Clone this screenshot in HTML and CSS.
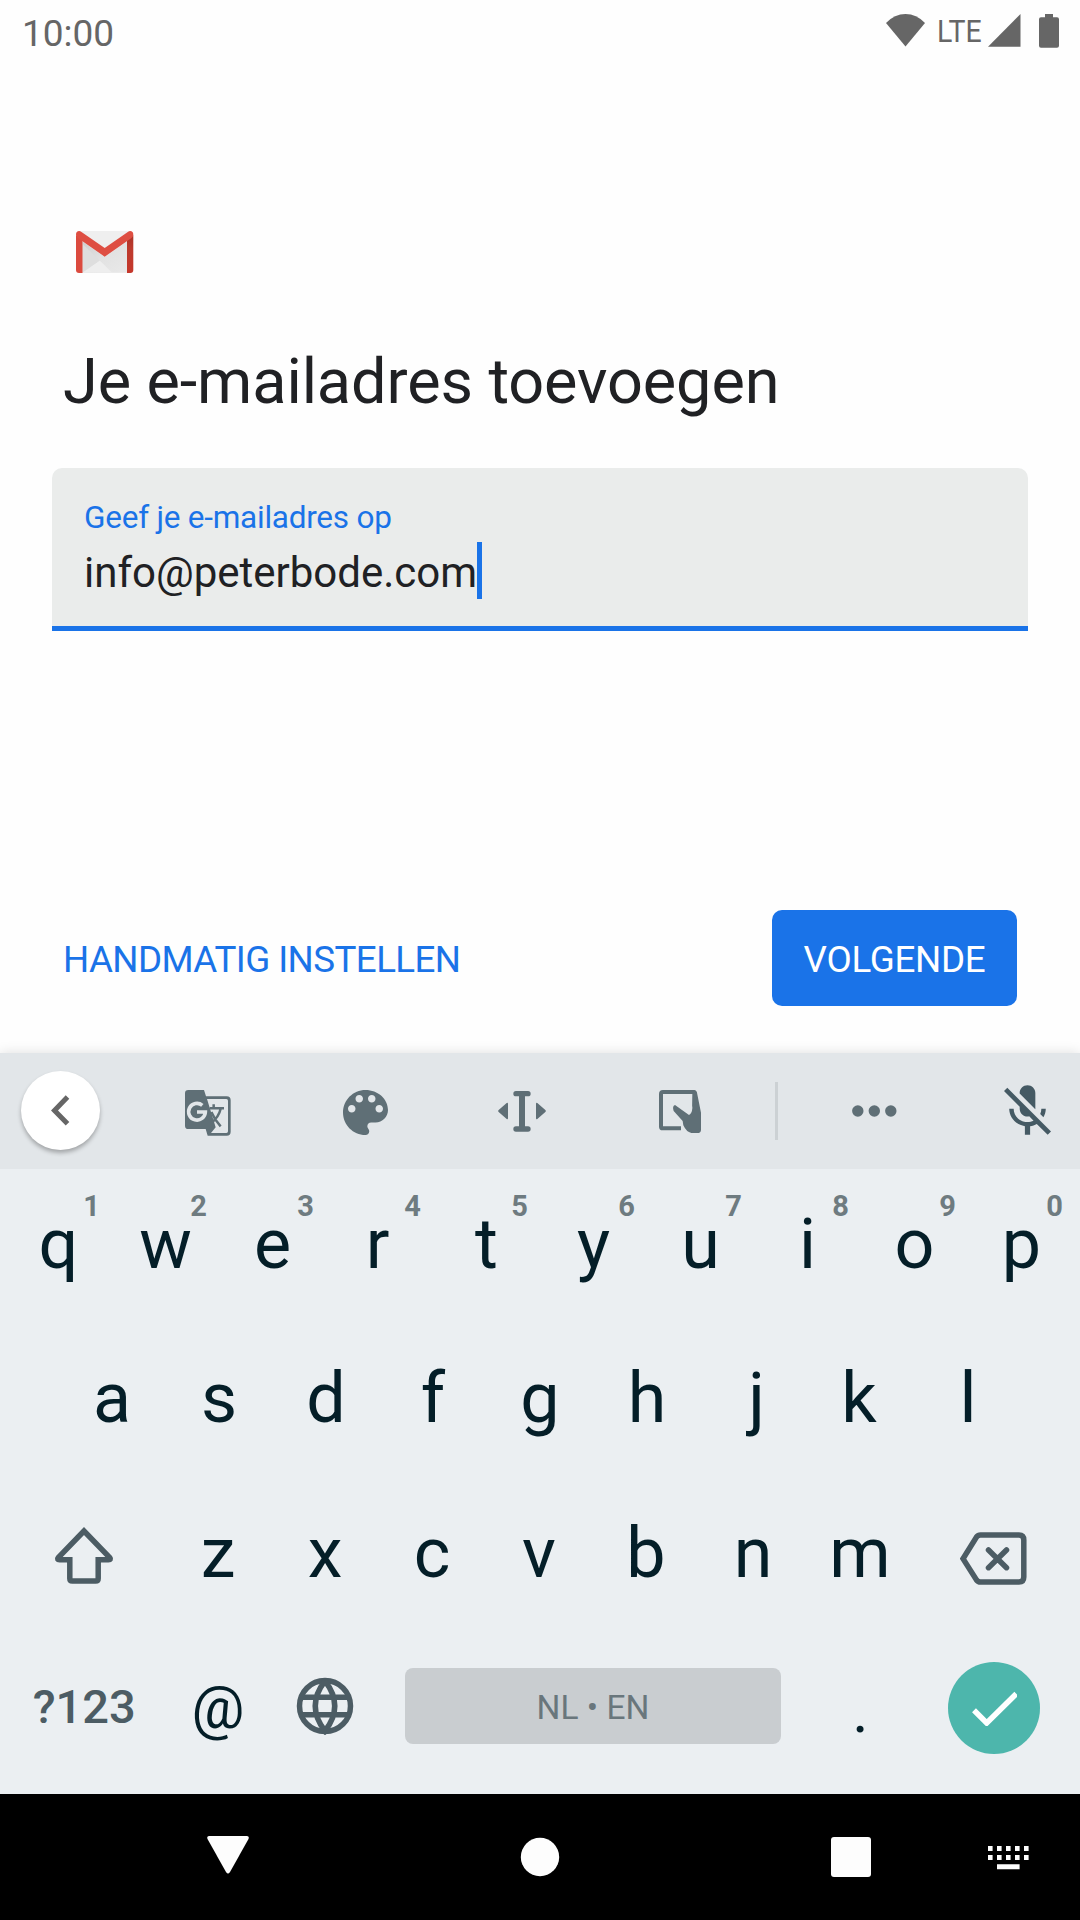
FILE: index.html
```html
<!DOCTYPE html>
<html lang="nl">
<head>
<meta charset="utf-8">
<title>Je e-mailadres toevoegen</title>
<link rel="stylesheet" href="styles.css">
</head>
<body>
<div class="screen">
  <header class="status">
    <span class="clock">10:00</span>
    <div class="status-icons">
      <svg class="wifi" width="39" height="33" viewBox="0 0 39 33"><path d="M0 9Q8.500 0 19.500 0T39 9L19.500 32.500Z"/></svg>
      <span class="network">LTE</span>
      <svg class="signal" width="33" height="33" viewBox="0 0 33 33"><path d="M32.500 0V32.700H0Z"/></svg>
      <svg class="battery" width="20" height="34" viewBox="0 0 20 34"><path d="M6 0H14V3.300H18Q20 3.300 20 5.300V31.700Q20 33.700 18 33.700H2Q0 33.700 0 31.700V5.300Q0 3.300 2 3.300H6Z"/></svg>
    </div>
  </header>

  <main class="setup">
    <svg class="gmail" width="58" height="42" viewBox="0 0 58 42">
      <defs>
        <linearGradient id="rightBar" x1="0" y1="0" x2="0" y2="1"><stop offset="0" stop-color="#a93227"/><stop offset=".35" stop-color="#bd3a2d"/><stop offset="1" stop-color="#c5372b"/></linearGradient>
        <linearGradient id="fold" x1="0" y1="0" x2="1" y2="1"><stop offset="0" stop-color="#cfcfcf"/><stop offset=".5" stop-color="#e2e2e2"/><stop offset="1" stop-color="#e9e9e9"/></linearGradient>
      </defs>
      <path d="M3 0H54.500V42H3Z" fill="#efefef"/>
      <path d="M6.500 10.500L28.700 26L51 10.500V41.500H6.500Z" fill="url(#fold)"/>
      <path d="M6.500 41.500L23.700 29.500L36 41.500Z" fill="#eeeeee"/>
      <path d="M6.500 13L23.700 29.500L6.500 41.500Z" fill="#dedede"/>
      <path d="M0 4L6.500 9V42H3Q0 42 0 39Z" fill="#db4a3e"/>
      <path d="M57.300 4L51 9V42H54.300Q57.300 42 57.300 39Z" fill="url(#rightBar)"/>
      <path d="M0 3.500Q0 0 3.200 0Q4.200 0 5.500 1L28.700 17L51.800 1Q53.100 0 54.100 0Q57.300 0 57.300 3.500Q57.300 5.500 55.500 7L28.700 25.700L1.800 7Q0 5.500 0 3.500Z" fill="#de4e42"/>
    </svg>
    <h1 class="title">Je e-mailadres toevoegen</h1>
    <div class="field">
      <span class="field-label">Geef je e-mailadres op</span>
      <div class="field-value"><span>info@peterbode.com</span><i class="caret"></i></div>
    </div>
    <div class="actions">
      <span class="manual">HANDMATIG INSTELLEN</span>
      <span class="next">VOLGENDE</span>
    </div>
  </main>

  <section class="keyboard">
    <div class="toolbar">
      <div class="back"><svg width="19" height="31" viewBox="0 0 19 31"><path d="M16.500 2L3.500 15.400L16.500 28.800" fill="none" stroke="#666" stroke-width="5"/></svg></div>
      <svg class="translate" width="46" height="46" viewBox="0 0 138 138">
        <path d="M10 0H57L63 19H125Q137 19 137 31V125Q137 137 125 137H68L62 117H10Q0 117 0 107V10Q0 0 10 0Z"/>
        <path d="M66 27H124Q129 27 129 32V124Q129 129 124 129H78L92 112Z" fill="#e2e6e9"/>
        <path d="M52 46A25 25 0 1 0 61 66H36" fill="none" stroke="#e2e6e9" stroke-width="11"/>
        <path d="M74 55H117M86 43V55M107 56Q101 82 79 98M79 66Q88 88 107 109" fill="none" stroke="#5f6f76" stroke-width="7.500"/>
      </svg>
      <svg class="palette" width="45" height="45" viewBox="3 3 18 18"><path d="M12 3c-4.970 0-9 4.030-9 9s4.030 9 9 9c.830 0 1.500-.670 1.500-1.500 0-.390-.150-.740-.390-1.010-.230-.260-.380-.610-.380-.990 0-.830.670-1.500 1.500-1.500H16c2.760 0 5-2.240 5-5 0-4.420-4.030-8-9-8zm-5.500 9c-.830 0-1.500-.670-1.500-1.500S5.670 9 6.500 9 8 9.670 8 10.500 7.330 12 6.500 12zm3-4C8.670 8 8 7.330 8 6.500S8.670 5 9.500 5s1.500.670 1.500 1.500S10.330 8 9.500 8zm5 0c-.830 0-1.500-.670-1.500-1.500S13.670 5 14.500 5s1.500.670 1.500 1.500S15.330 8 14.500 8zm3 4c-.830 0-1.500-.670-1.500-1.500S16.670 9 17.500 9s1.500.670 1.500 1.500-.670 1.500-1.500 1.500z"/></svg>
      <svg class="cursor" width="48" height="41" viewBox="0 0 144 123">
        <path d="M26 36Q30 34 30 39V81Q30 86 26 84L2 63Q-1 60 2 57ZM118 36Q114 34 114 39V81Q114 86 118 84L142 63Q145 60 142 57Z"/>
        <path d="M54 8H90M54 114H90" fill="none" stroke="#5f6f76" stroke-width="16" stroke-linecap="round"/><path d="M63 8H81V114H63Z"/>
      </svg>
      <svg class="one-hand" width="42" height="43" viewBox="0 0 126 129">
        <path d="M66 115H11Q6 115 6 110V12Q6 6 12 6H102Q108 6 108 12L106 50" fill="none" stroke="#5f6f76" stroke-width="12"/>
        <path d="M100 0H105Q112 0 114 8L126 68V119Q126 129 115 129H97Q82 126 73 106L71 93L44 63Q39 48 48 45L90 75Q99 70 100 55Z"/>
      </svg>
      <i class="divider"></i>
      <svg class="more" width="45" height="12" viewBox="0 0 45 12"><circle cx="5.800" cy="6" r="5.700"/><circle cx="22.300" cy="6" r="5.700"/><circle cx="38.800" cy="6" r="5.700"/></svg>
      <svg class="mic" width="47" height="50" viewBox="3 2 18 19"><path d="M19 11h-1.700c0 .740-.160 1.430-.430 2.050l1.230 1.230c.560-.980.900-2.090.900-3.280zm-4.020.170c0-.060.020-.110.020-.170V5c0-1.660-1.340-3-3-3S9 3.340 9 5v.180l5.980 5.990zM4.270 3L3 4.270l6.010 6.010V11c0 1.660 1.330 3 2.990 3 .220 0 .440-.030.650-.080l1.660 1.660c-.710.330-1.500.520-2.310.520-2.760 0-5.300-2.100-5.300-5.100H5c0 3.410 2.720 6.230 6 6.720V21h2v-3.280c.910-.130 1.770-.450 2.540-.900L19.730 21 21 19.730 4.270 3z"/></svg>
    </div>

    <div class="keys row-top">
      <span class="key">q<sup class="hint">1</sup></span><span class="key">w<sup class="hint">2</sup></span><span class="key">e<sup class="hint">3</sup></span><span class="key nudge-left">r<sup class="hint">4</sup></span><span class="key">t<sup class="hint">5</sup></span><span class="key">y<sup class="hint">6</sup></span><span class="key">u<sup class="hint">7</sup></span><span class="key">i<sup class="hint">8</sup></span><span class="key">o<sup class="hint">9</sup></span><span class="key">p<sup class="hint">0</sup></span>
    </div>
    <div class="keys row-home">
      <span class="key">a</span><span class="key">s</span><span class="key">d</span><span class="key">f</span><span class="key">g</span><span class="key">h</span><span class="key nudge-right">j</span><span class="key nudge-left">k</span><span class="key">l</span>
    </div>
    <div class="keys row-shift">
      <span class="key wide"><svg class="shift" width="60" height="60" viewBox="55 1524 60 60"><path d="M85 1531L59.300 1557.500Q57.500 1559.700 60.500 1559.700H70.800V1578.500Q70.800 1581 73.300 1581H96.700Q99.200 1581 99.200 1578.500V1559.700H109.500Q112.500 1559.700 110.700 1557.500Z"/></svg></span>
      <span class="key">z</span><span class="key">x</span><span class="key">c</span><span class="key">v</span><span class="key">b</span><span class="key">n</span><span class="key">m</span>
      <span class="key wide"><svg class="backspace" width="67" height="54" viewBox="960 1532 67 54"><path d="M963 1558.700L976.500 1537Q978 1535 980.500 1535H1019Q1023.800 1535 1023.800 1540V1577Q1023.800 1582 1019 1582H980.500Q978 1582 976.500 1580ZM988.500 1550L1006.500 1567.700M1006.500 1550L988.500 1567.700"/></svg></span>
    </div>
    <div class="keys row-space">
      <span class="key wide symbols">?123</span>
      <span class="key at">@</span>
      <span class="key"><svg class="globe" width="58" height="58" viewBox="296 1677 58 58"><circle cx="325" cy="1706" r="25.500"/><path d="M301 1697.300H349M301 1714.700H349M325 1681Q305.500 1706 325 1731Q344.500 1706 325 1681"/></svg></span>
      <span class="space">NL • EN</span>
      <span class="key dot">.</span>
      <span class="key wide"><span class="enter"><svg width="46" height="36" viewBox="971 1690 46 36"><path d="M974 1710.300L986.700 1723L1016.300 1693.700"/></svg></span></span>
    </div>
  </section>

  <nav class="navbar">
    <svg class="nav-back" width="42" height="38" viewBox="0 0 42 38"><path d="M2 0H40Q42.500 0 41.500 3L23 36Q21 39 19 36L.500 3Q-.500 0 2 0Z"/></svg>
    <svg class="nav-home" width="40" height="40" viewBox="0 0 40 40"><circle cx="20" cy="20" r="19.200"/></svg>
    <svg class="nav-recent" width="40" height="40" viewBox="0 0 40 40"><rect width="40" height="40" rx="3"/></svg>
    <svg class="nav-keyboard" width="41" height="24" viewBox="0 0 41 24"><path d="M0 0h4.600v5H0zM9 0h4.600v5H9zM18 0h4.600v5H18zM27 0h4.600v5H27zM36 0h4.600v5H36zM0 9h4.600v5H0zM9 9h4.600v5H9zM18 9h4.600v5H18zM27 9h4.600v5H27zM36 9h4.600v5H36zM9 18.300h22.600v5H9z"/></svg>
  </nav>
</div>
</body>
</html>
```
FILE: styles.css
```css
* { box-sizing: border-box; }

body {
  margin: 0;
  font-family: Roboto, "Liberation Sans", sans-serif;
  background: #fefefe;
}

svg { display: block; flex: none; }

.screen {
  width: 1080px;
  height: 1920px;
  display: flex;
  flex-direction: column;
  overflow: hidden;
}

/* Status bar */
.status {
  height: 67px;
  padding: 0 21px 0 22px;
  display: flex;
  justify-content: space-between;
  color: #666;
  line-height: 67px;
}
.clock { font-size: 37px; }
.status-icons {
  display: flex;
  align-items: flex-start;
  padding-top: 14px;
  fill: #666;
}
.network {
  width: 48px;
  margin-left: 12px;
  font-size: 32px;
  line-height: 34px;
  transform: scaleX(.89);
  transform-origin: left;
}
.signal { margin-left: 3px; }
.battery { margin-left: 18px; }

/* Account setup form */
.setup {
  height: 986px;
  display: flex;
  flex-direction: column;
}
.gmail { margin: 164px 0 0 76px; }
.title {
  margin: 69px 0 0 63px;
  font-size: 63px;
  font-weight: 400;
  line-height: 80px;
  letter-spacing: -.1px;
  color: #202124;
}
.field {
  height: 163px;
  margin: 46px 52px 0;
  padding: 30px 32px 0;
  border-bottom: 5px solid #1a73e8;
  border-radius: 10px 10px 0 0;
  background: #eaeceb;
}
.field-label {
  display: block;
  font-size: 31.5px;
  line-height: 40px;
  letter-spacing: -.24px;
  color: #1a73e8;
}
.field-value {
  display: flex;
  margin-top: 4px;
  font-size: 42px;
  line-height: 61px;
  color: #202124;
}
.caret {
  width: 5px;
  height: 57px;
  background: #1a73e8;
}
.actions {
  display: flex;
  justify-content: space-between;
  margin: 279px 63px 0 63px;
  font-size: 36.750px;
  line-height: 100px;
}
.manual { color: #1a73e8; letter-spacing: -.58px; }
.next {
  width: 245px;
  height: 96px;
  border-radius: 10px;
  background: #1a73e8;
  color: #fff;
  letter-spacing: -.3px;
  text-align: center;
}

/* Keyboard */
.keyboard {
  height: 741px;
  background: #ebeff2;
  box-shadow: 0 0 12px rgba(0, 0, 0, .13);
  color: #041e28;
}
.toolbar {
  height: 116px;
  display: flex;
  align-items: center;
  padding-left: 21px;
  background: #e2e6e9;
  fill: #5f6f76;
}
.back {
  width: 79px;
  height: 79px;
  display: flex;
  align-items: center;
  justify-content: center;
  margin-bottom: 1px;
  border-radius: 50%;
  background: #fff;
  box-shadow: 0 3px 4px rgba(0, 0, 0, .28);
}
.translate { margin: 4px 0 0 85px; }
.palette { margin: 2px 0 0 112px; }
.cursor { margin-left: 110px; }
.one-hand { margin-left: 113px; }
.divider {
  width: 3px;
  height: 58px;
  margin-left: 74px;
  background: #ccd1d4;
}
.more { margin-left: 74px; }
.mic {
  margin: -3px 0 0 107px;
  fill: #455a64;
}

.keys { display: flex; }
.row-top { height: 150px; line-height: 150px; padding: 0 5px; }
.row-home { height: 158px; line-height: 158px; padding: 0 58.500px; }
.row-shift { height: 152px; line-height: 152px; padding: 0 4px; }
.row-space { height: 155px; line-height: 155px; padding: 0 4px; }
.key {
  position: relative;
  width: 107px;
  display: flex;
  align-items: center;
  justify-content: center;
  font-size: 70px;
}
.nudge-left { padding-right: 4px; }
.nudge-right { padding-left: 5px; }
.wide { width: 160.500px; }
.hint {
  position: absolute;
  top: 20px;
  right: 12px;
  font-size: 29px;
  font-weight: 700;
  line-height: 34px;
  color: #6e7b80;
}
.key svg {
  fill: none;
  stroke: #4c5c64;
  stroke-width: 5.500;
}
.key .shift { margin-top: 2px; }
.key .backspace { stroke-linecap: round; margin-top: 11px; }
.key .globe { margin-bottom: 1px; }
.symbols { font-size: 47px; font-weight: 500; color: #4c5c64; }
.at { font-size: 59px; padding-top: 2px; }
.dot { font-size: 62px; padding-top: 7px; }
.space {
  width: 376px;
  height: 76px;
  margin: 39px 26px 0 26.500px;
  border-radius: 8px;
  background: #c9cdd0;
  color: #69767c;
  font-size: 33.500px;
  line-height: 79px;
  text-align: center;
}
.enter {
  width: 92px;
  height: 92px;
  display: flex;
  align-items: center;
  justify-content: center;
  margin-top: 3px;
  border-radius: 50%;
  background: #4db6ac;
}
.key .enter svg { stroke: #fff; }

/* System navigation */
.navbar {
  height: 126px;
  display: flex;
  align-items: center;
  padding-left: 207px;
  background: #000;
  fill: #fdfdfd;
}
.nav-back { margin-top: -4px; }
.nav-home,
.nav-recent { margin-left: 271px; }
.nav-keyboard { margin: 1px 0 0 116.500px; }
```
